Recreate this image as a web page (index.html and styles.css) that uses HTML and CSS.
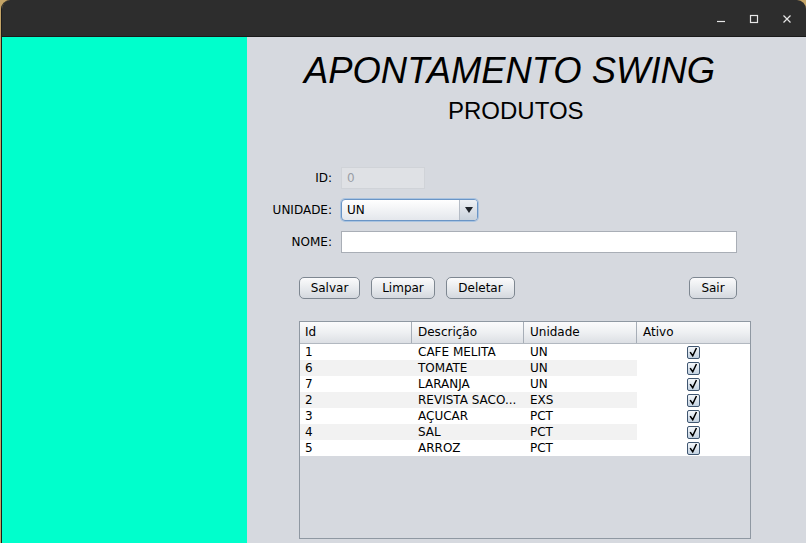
FILE: index.html
```html
<!DOCTYPE html>
<html>
<head>
<meta charset="utf-8">
<link rel="stylesheet" href="styles.css">
</head>
<body>
<div class="window">
  <div class="titlebar">
    <div class="controls">
      <svg class="ctl" width="12" height="12" viewBox="0 0 12 12"><path d="M2 8.5H10" stroke="#e6e6e6" stroke-width="1.2"/></svg>
      <svg class="ctl" width="12" height="12" viewBox="0 0 12 12"><rect x="2.5" y="2.5" width="7" height="7" fill="none" stroke="#e6e6e6" stroke-width="1.2"/></svg>
      <svg class="ctl" width="12" height="12" viewBox="0 0 12 12"><path d="M2.5 2.5L9.5 9.5M9.5 2.5L2.5 9.5" stroke="#e6e6e6" stroke-width="1.2"/></svg>
    </div>
  </div>
  <div class="main">
    <div class="side"></div>
    <div class="content">
      <h1 class="title">APONTAMENTO SWING</h1>
      <h2 class="subtitle">PRODUTOS</h2>
      <div class="form">
        <label class="lbl">ID:</label>
        <div class="field field-id disabled">0</div>
        <label class="lbl">UNIDADE:</label>
        <div class="combo"><span class="combo-text">UN</span><span class="combo-btn"><span class="tri"></span></span></div>
        <label class="lbl">NOME:</label>
        <div class="field field-nome"></div>
      </div>
      <div class="buttons">
        <button class="btn">Salvar</button>
        <button class="btn">Limpar</button>
        <button class="btn">Deletar</button>
        <button class="btn btn-right">Sair</button>
      </div>
      <div class="table">
        <div class="thead">
          <div class="th">Id</div>
          <div class="th">Descrição</div>
          <div class="th">Unidade</div>
          <div class="th last">Ativo</div>
        </div>
        <div class="tr"><div class="td">1</div><div class="td">CAFE MELITA</div><div class="td">UN</div><div class="td chk"><svg class="cb" width="13" height="13" viewBox="0 0 13 13"><path d="M3 6.8L5.6 10.4L9.6 2" fill="none" stroke="#000" stroke-width="1.8" stroke-linecap="square"/></svg></div></div>
        <div class="tr alt"><div class="td">6</div><div class="td">TOMATE</div><div class="td">UN</div><div class="td chk"><svg class="cb" width="13" height="13" viewBox="0 0 13 13"><path d="M3 6.8L5.6 10.4L9.6 2" fill="none" stroke="#000" stroke-width="1.8" stroke-linecap="square"/></svg></div></div>
        <div class="tr"><div class="td">7</div><div class="td">LARANJA</div><div class="td">UN</div><div class="td chk"><svg class="cb" width="13" height="13" viewBox="0 0 13 13"><path d="M3 6.8L5.6 10.4L9.6 2" fill="none" stroke="#000" stroke-width="1.8" stroke-linecap="square"/></svg></div></div>
        <div class="tr alt"><div class="td">2</div><div class="td">REVISTA SACO...</div><div class="td">EXS</div><div class="td chk"><svg class="cb" width="13" height="13" viewBox="0 0 13 13"><path d="M3 6.8L5.6 10.4L9.6 2" fill="none" stroke="#000" stroke-width="1.8" stroke-linecap="square"/></svg></div></div>
        <div class="tr"><div class="td">3</div><div class="td">AÇUCAR</div><div class="td">PCT</div><div class="td chk"><svg class="cb" width="13" height="13" viewBox="0 0 13 13"><path d="M3 6.8L5.6 10.4L9.6 2" fill="none" stroke="#000" stroke-width="1.8" stroke-linecap="square"/></svg></div></div>
        <div class="tr alt"><div class="td">4</div><div class="td">SAL</div><div class="td">PCT</div><div class="td chk"><svg class="cb" width="13" height="13" viewBox="0 0 13 13"><path d="M3 6.8L5.6 10.4L9.6 2" fill="none" stroke="#000" stroke-width="1.8" stroke-linecap="square"/></svg></div></div>
        <div class="tr"><div class="td">5</div><div class="td">ARROZ</div><div class="td">PCT</div><div class="td chk"><svg class="cb" width="13" height="13" viewBox="0 0 13 13"><path d="M3 6.8L5.6 10.4L9.6 2" fill="none" stroke="#000" stroke-width="1.8" stroke-linecap="square"/></svg></div></div>
      </div>
    </div>
  </div>
</div>
</body>
</html>
```

FILE: styles.css
```css
* { box-sizing: border-box; }
html, body { margin: 0; padding: 0; }
body {
  width: 806px;
  height: 543px;
  overflow: hidden;
  background: #c4a466;
  font-family: "DejaVu Sans", sans-serif;
  font-size: 12px;
  color: #000;
}
.window {
  margin-left: 1px;
  height: 543px;
  display: flex;
  flex-direction: column;
  border-left: 1px solid #1d1d1d;
  border-radius: 9px 9px 0 0;
  overflow: hidden;
}
.titlebar {
  height: 37px;
  flex: none;
  background: #2d2d2d;
  border-bottom: 1px solid #1a1a1a;
  display: flex;
  justify-content: flex-end;
  align-items: center;
}
.controls {
  display: flex;
  gap: 21px;
  margin-right: 13px;
  margin-top: 1px;
}
.ctl { display: block; }
.main {
  flex: 1;
  display: flex;
  min-height: 0;
}
.side {
  width: 245px;
  flex: none;
  background: #00ffcc;
}
.content {
  flex: 1;
  background: #d6d9df;
  display: flex;
  flex-direction: column;
}
.title {
  margin: 14px 0 0 57px;
  font-family: "Liberation Sans", Arial, sans-serif;
  font-style: italic;
  font-weight: normal;
  font-size: 36.4px;
  line-height: 40px;
}
.subtitle {
  margin: 6px 0 0 201px;
  font-family: "Liberation Sans", Arial, sans-serif;
  font-weight: normal;
  font-size: 24px;
  line-height: 28px;
}
.form {
  margin-top: 42px;
  display: grid;
  grid-template-columns: 85px auto;
  grid-auto-rows: 22px;
  column-gap: 9px;
  row-gap: 10px;
  justify-items: start;
}
.lbl {
  justify-self: end;
  align-self: center;
  line-height: 14px;
}
.field {
  height: 22px;
  background: #fff;
  border: 1px solid #a9aeb6;
  padding: 0 5px;
  line-height: 20px;
}
.field-id { width: 84px; }
.field-nome { width: 396px; }
.disabled {
  background: #dfe1e5;
  border-color: #d0d3d8;
  color: #9a9ea5;
}
.combo {
  width: 137px;
  height: 22px;
  display: flex;
  border: 1px solid #6a95c6;
  border-radius: 4px;
  box-shadow: 0 0 0 1px #a9c3e0;
  background: linear-gradient(#ffffff, #e4e7ec);
  overflow: hidden;
}
.combo-text {
  flex: 1;
  padding-left: 5px;
  line-height: 20px;
}
.combo-btn {
  width: 18px;
  border-left: 1px solid #b5bcc6;
  background: linear-gradient(#eef1f5, #c9d2dc);
  display: flex;
  align-items: center;
  justify-content: center;
}
.tri {
  width: 0;
  height: 0;
  border-left: 4px solid transparent;
  border-right: 4px solid transparent;
  border-top: 6px solid #1f242a;
}
.buttons {
  margin: 24px 69px 0 52px;
  display: flex;
  gap: 11px;
}
.btn {
  height: 22px;
  padding: 0 10px;
  font-family: "DejaVu Sans", sans-serif;
  font-size: 12px;
  color: #000;
  border: 1px solid #7e8791;
  border-radius: 5px;
  background: linear-gradient(#fbfbfc, #e4e7eb 60%, #d4d8de);
  line-height: 20px;
}
.btn:nth-child(1) { width: 61px; }
.btn:nth-child(2) { width: 64px; }
.btn:nth-child(3) { width: 69px; }
.btn-right { margin-left: auto; width: 48px; }
.table {
  margin: 22px 0 0 52px;
  width: 452px;
  height: 218px;
  border: 1px solid #8f98a2;
  background: #d6d9df;
}
.thead {
  display: grid;
  grid-template-columns: 112px 112px 113px 113px;
  height: 22px;
  border-bottom: 1px solid #b2b8c0;
  background: linear-gradient(#fbfbfc, #eef0f2 50%, #dcdfe4);
}
.th {
  padding-left: 5px;
  line-height: 20px;
  border-right: 1px solid #a7aeb7;
}
.th:nth-child(2), .th:nth-child(3), .th:nth-child(4) { padding-left: 6px; }
.th.last { border-right: none; }
.tr {
  display: grid;
  grid-template-columns: 112px 112px 113px 113px;
  height: 16px;
  background: #fff;
}
.tr.alt { background: #f2f2f2; }
.td {
  padding-left: 5px;
  line-height: 16px;
  white-space: nowrap;
  overflow: hidden;
}
.td:nth-child(2) { padding-left: 6px; }
.td:nth-child(3) { padding-left: 6px; }
.td.chk {
  background: #fff;
  padding-left: 0;
  display: flex;
  align-items: center;
  justify-content: center;
}
.cb {
  display: block;
  border: 1px solid #3f5671;
  border-radius: 2px;
  background: linear-gradient(#f4f7fa, #c3d2e1);
}
```
